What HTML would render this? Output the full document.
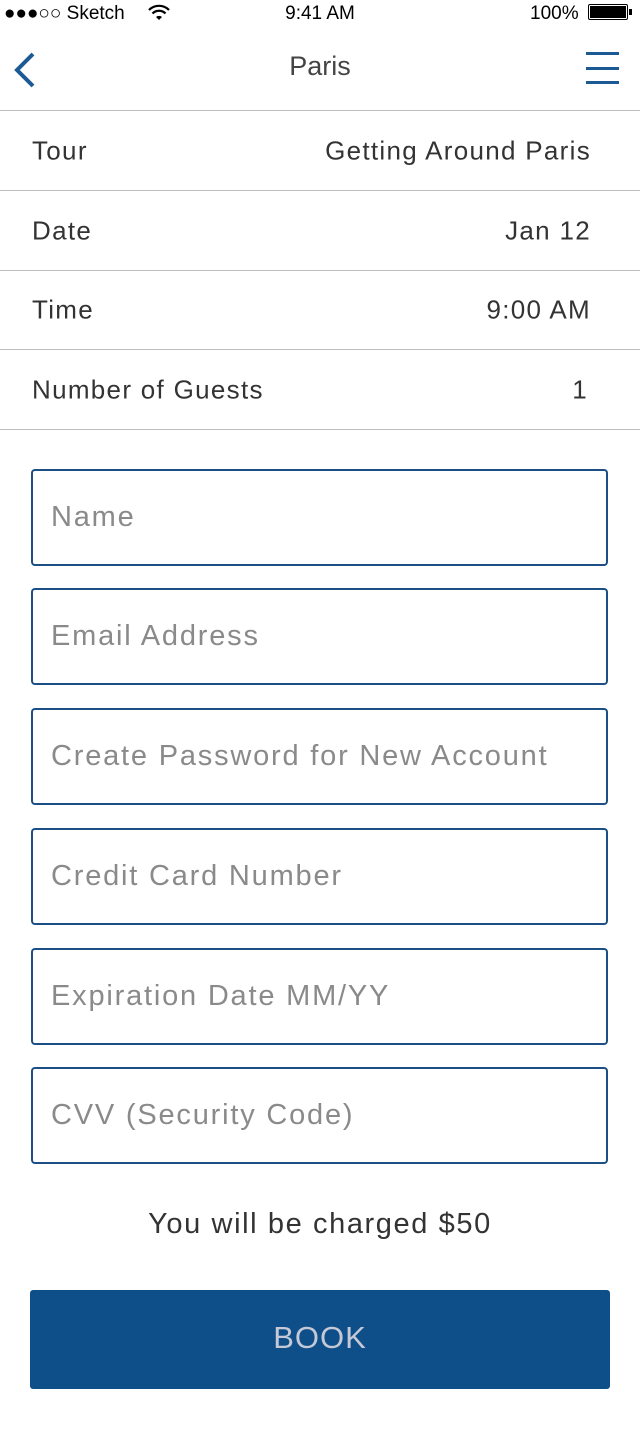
<!DOCTYPE html>
<html><head><style>
body{margin:0;width:640px;height:1440px;background:#fff;font-family:"Liberation Sans",sans-serif;position:relative;overflow:hidden;color:#333}
.a{position:absolute}
.row{position:absolute;left:0;width:640px;height:79px;border-bottom:1px solid #bdbdbd;font-size:26px;color:#333;letter-spacing:1.3px}
.row span{position:absolute;top:50%;transform:translateY(-50%)}
.row .l{left:32px}.row .r{right:49px}
.in{position:absolute;left:31px;width:573px;height:93px;border:2.5px solid #1b4f86;border-radius:4px}
.in span{position:absolute;left:18px;top:50%;transform:translateY(-52%);font-size:29px;color:#8a8a8a;letter-spacing:1.8px;white-space:nowrap}
</style></head><body>
<div class="a" style="left:4px;top:3px;font-size:19px;color:#000">●●●○○ Sketch</div>
<svg class="a" style="left:148px;top:4px" width="22" height="17" viewBox="0 0 22 17"><path d="M1 6 A14 14 0 0 1 21 6" stroke="#000" stroke-width="2.2" fill="none"/><path d="M4.5 9.5 A9 9 0 0 1 17.5 9.5" stroke="#000" stroke-width="2.2" fill="none"/><path d="M8 13 A4.5 4.5 0 0 1 14 13 L11 16Z" fill="#000"/></svg>
<div class="a" style="left:0;width:640px;text-align:center;top:3px;font-size:19px;color:#000">9:41 AM</div>
<div class="a" style="left:530px;top:3px;font-size:19px;color:#000">100%</div>
<div class="a" style="left:588px;top:4px;width:40px;height:16px;border:1px solid #000;border-radius:2px;box-sizing:border-box;padding:1px"><div style="background:#000;width:100%;height:100%"></div></div>
<div class="a" style="left:629px;top:9px;width:3px;height:6px;background:#000"></div>
<svg class="a" style="left:12px;top:52px" width="24" height="36"><path d="M21 2 L5 18 L21 34" stroke="#1b5a94" stroke-width="4" fill="none"/></svg>
<div class="a" style="left:0;width:640px;text-align:center;top:51px;font-size:27px;color:#444">Paris</div>
<div class="a" style="left:586px;top:52px;width:33px;height:3px;background:#1b5a94"></div>
<div class="a" style="left:586px;top:67px;width:33px;height:3px;background:#1b5a94"></div>
<div class="a" style="left:586px;top:81px;width:33px;height:3px;background:#1b5a94"></div>
<div class="a" style="left:0;top:110px;width:640px;height:1px;background:#bdbdbd"></div>
<div class="row" style="top:111px"><span class="l">Tour</span><span class="r">Getting Around Paris</span></div>
<div class="row" style="top:191px"><span class="l">Date</span><span class="r">Jan 12</span></div>
<div class="row" style="top:270px"><span class="l">Time</span><span class="r">9:00 AM</span></div>
<div class="row" style="top:350px"><span class="l">Number of Guests</span><span class="r" style="right:52px">1</span></div>
<div class="in" style="top:469px"><span>Name</span></div>
<div class="in" style="top:588px"><span>Email Address</span></div>
<div class="in" style="top:708px"><span>Create Password for New Account</span></div>
<div class="in" style="top:828px"><span>Credit Card Number</span></div>
<div class="in" style="top:948px"><span>Expiration Date MM/YY</span></div>
<div class="in" style="top:1067px"><span>CVV (Security Code)</span></div>
<div class="a" style="left:0;width:640px;text-align:center;top:1208px;font-size:29px;color:#333;letter-spacing:1.6px">You will be charged $50</div>
<div class="a" style="left:30px;top:1290px;width:580px;height:99px;background:#0e4f8a;border-radius:3px;color:#c5c9d6;font-size:31px;text-align:center;line-height:96px;letter-spacing:1px">BOOK</div>
</body></html>
